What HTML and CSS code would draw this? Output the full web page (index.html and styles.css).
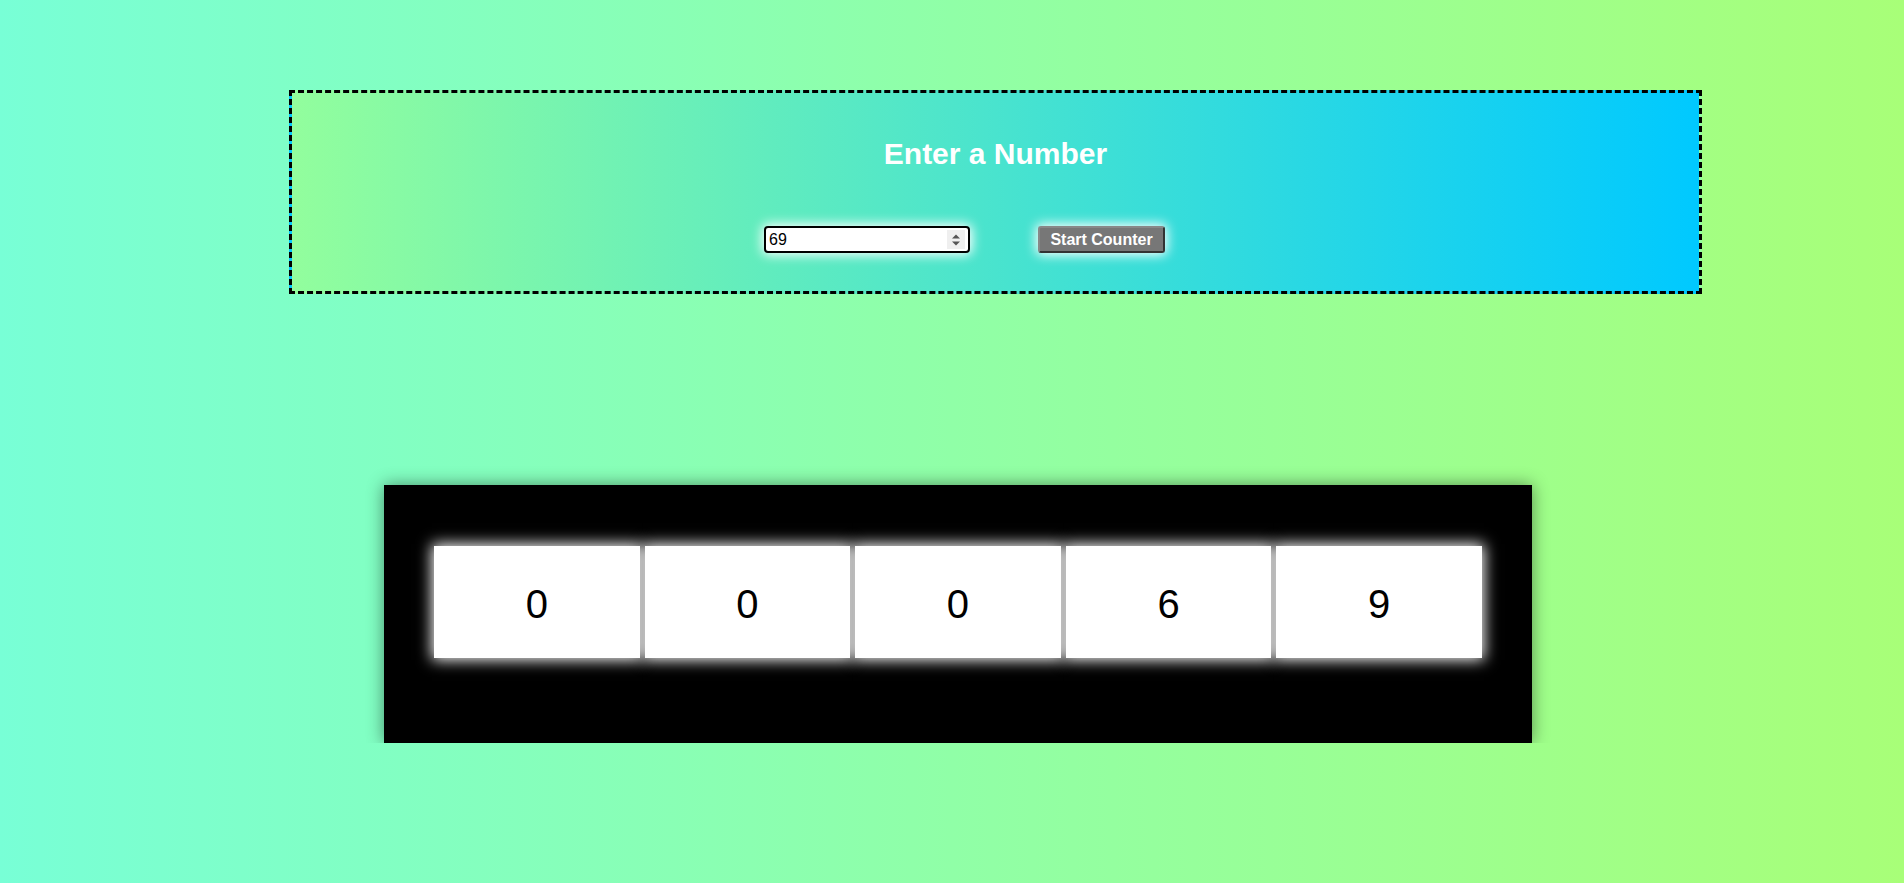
FILE: index.html
```html
<!DOCTYPE html>
<html>
<head>
<meta charset="utf-8">
<link rel="stylesheet" href="styles.css">
</head>
<body>
<div class="panel">
  <h2 class="title">Enter a Number</h2>
  <div class="controls">
    <div class="num-input">
      <input class="num-field" type="text" value="69">
      <span class="spin">
        <svg width="10" height="14" viewBox="0 0 10 14"><path d="M1 5.5 L5 1.5 L9 5.5 Z M1 8.5 L5 12.5 L9 8.5 Z" fill="#555"/></svg>
      </span>
    </div>
    <button class="start-btn">Start Counter</button>
  </div>
</div>
<div class="counter">
  <div class="cells">
    <div class="cell">0</div>
    <div class="cell">0</div>
    <div class="cell">0</div>
    <div class="cell">6</div>
    <div class="cell">9</div>
  </div>
</div>
</body>
</html>
```
FILE: styles.css
```css
html {
  height: 100%;
  background: linear-gradient(to right, #78ffd6, #a8ff78);
}
body {
  margin: 0;
  padding-top: 90px;
  font-family: "Liberation Sans", Arial, sans-serif;
}
.panel {
  box-sizing: border-box;
  width: 1413px;
  height: 204px;
  margin-left: 289px;
  border: 3px dashed #000;
  background: linear-gradient(to right, #92fe9d, #00c9ff);
  padding-top: 43px;
  text-align: center;
}
.title {
  margin: 0 0 55px;
  font-size: 30px;
  line-height: 35px;
  font-weight: bold;
  color: #fff;
}
.controls {
  display: flex;
  justify-content: center;
  align-items: center;
}
.num-input {
  box-sizing: border-box;
  width: 206px;
  height: 27px;
  border: 2px solid #000;
  border-radius: 4px;
  background: #fff;
  box-shadow: 0 0 12px 2px #fff;
  display: flex;
  align-items: center;
  padding: 0 3px 0 3px;
}
.num-field {
  flex: 1;
  min-width: 0;
  border: 0;
  outline: 0;
  padding: 0;
  margin: 0;
  font-family: "Liberation Sans", Arial, sans-serif;
  font-size: 16px;
  color: #000;
  background: transparent;
}
.spin {
  width: 18px;
  height: 19px;
  background: #efefef;
  display: flex;
  align-items: center;
  justify-content: center;
}
.start-btn {
  box-sizing: border-box;
  margin-left: 68px;
  margin-right: 62px;
  width: 127px;
  height: 27px;
  padding: 0;
  background: #777;
  color: #fff;
  font-family: "Liberation Sans", Arial, sans-serif;
  font-weight: bold;
  font-size: 16px;
  border: 2px solid #888;
  border-right-color: #333;
  border-bottom-color: #333;
  border-radius: 3px;
  box-shadow: 0 0 12px 2px #fff;
}
.counter {
  box-sizing: border-box;
  width: 1148px;
  height: 258px;
  margin: 191px 0 0 384px;
  background: #000;
  padding: 61px 50px 85px;
  box-shadow: 0 0 16px rgba(0, 0, 0, 0.45);
}
.cells {
  display: flex;
  gap: 5px;
  height: 112px;
}
.cell {
  flex: 1;
  background: #fff;
  box-shadow: 0 0 14px 2px #fff;
  display: flex;
  align-items: center;
  justify-content: center;
  padding-top: 4px;
  font-size: 40px;
  color: #000;
}
```
